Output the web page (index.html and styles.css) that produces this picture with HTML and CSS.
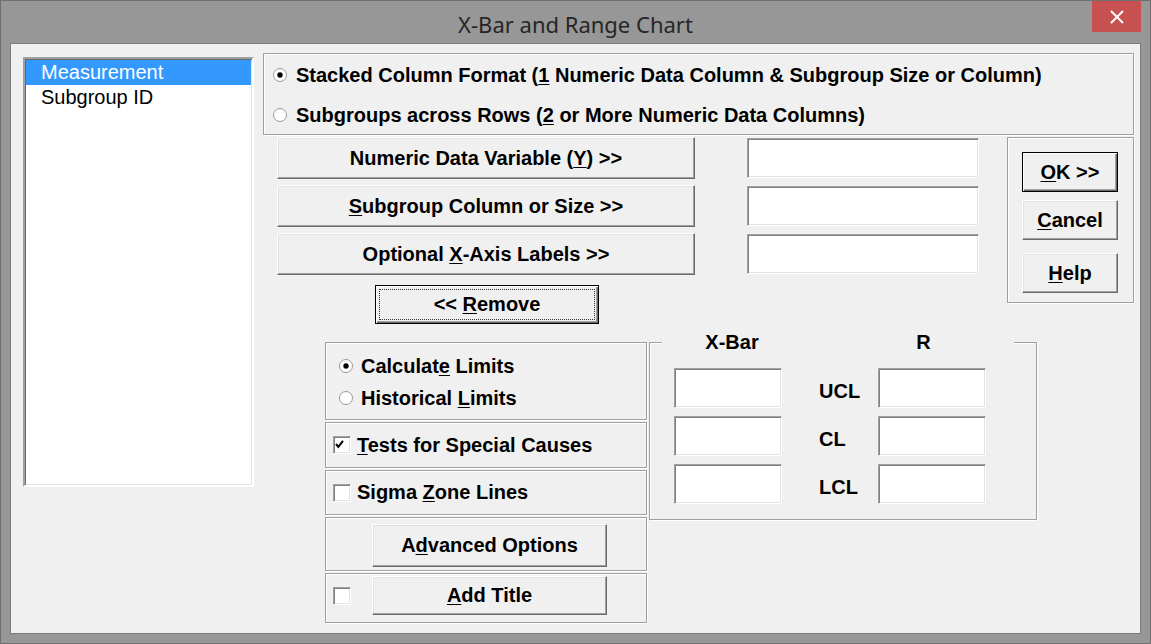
FILE: index.html
```html
<!DOCTYPE html>
<html>
<head>
<meta charset="utf-8">
<title>X-Bar and Range Chart</title>
<link rel="stylesheet" href="styles.css">
</head>
<body>
<div class="window">
  <div class="titlebar">
    <div class="title">X-Bar and Range Chart</div>
    <div class="close">
      <svg width="14" height="14" viewBox="0 0 14 14"><path d="M1 1 L13 13 M13 1 L1 13" stroke="#fff" stroke-width="2" fill="none"/></svg>
    </div>
  </div>
  <div class="client">
    <div class="listbox">
      <div class="item selected">Measurement</div>
      <div class="item">Subgroup ID</div>
    </div>
    <div class="right">
      <div class="etched format">
        <div class="opt">
          <svg class="radio" viewBox="0 0 14 14"><circle cx="7" cy="7" r="6.5" fill="#fff" stroke="#999"/><circle cx="7" cy="7" r="2.7" fill="#000"/></svg>
          <span>Stacked Column Format (<u>1</u> Numeric Data Column &amp; Subgroup Size or Column)</span>
        </div>
        <div class="opt">
          <svg class="radio" viewBox="0 0 14 14"><circle cx="7" cy="7" r="6.5" fill="#fff" stroke="#999"/></svg>
          <span>Subgroups across Rows (<u>2</u> or More Numeric Data Columns)</span>
        </div>
      </div>
      <div class="mid">
        <div class="vars">
          <div class="var-grid">
            <button class="btn var"><span>Numeric Data Variable (<u>Y</u>) &gt;&gt;</span></button>
            <div class="field"></div>
            <button class="btn var"><span><u>S</u>ubgroup Column or Size &gt;&gt;</span></button>
            <div class="field"></div>
            <button class="btn var"><span>Optional <u>X</u>-Axis Labels &gt;&gt;</span></button>
            <div class="field"></div>
          </div>
          <button class="btn default remove"><span>&lt;&lt; <u>R</u>emove</span></button>
        </div>
        <div class="etched actions">
          <button class="btn default ok"><span><u>O</u>K &gt;&gt;</span></button>
          <button class="btn cancel"><span><u>C</u>ancel</span></button>
          <button class="btn help"><span><u>H</u>elp</span></button>
        </div>
      </div>
      <div class="lower">
        <div class="stack">
          <div class="etched box box-limits">
            <div class="row">
              <svg class="radio" viewBox="0 0 14 14"><circle cx="7" cy="7" r="6.5" fill="#fff" stroke="#999"/><circle cx="7" cy="7" r="2.7" fill="#000"/></svg>
              <span>Calculat<u>e</u> Limits</span>
            </div>
            <div class="row">
              <svg class="radio" viewBox="0 0 14 14"><circle cx="7" cy="7" r="6.5" fill="#fff" stroke="#999"/></svg>
              <span>Historical <u>L</u>imits</span>
            </div>
          </div>
          <div class="etched box box-tests">
            <span class="check"><svg width="16" height="16" viewBox="0 0 16 16"><path d="M2 7 L4.3 9.8 L9 3.8" stroke="#000" stroke-width="2" fill="none"/></svg></span>
            <span class="lbl"><u>T</u>ests for Special Causes</span>
          </div>
          <div class="etched box box-sigma">
            <span class="check"></span>
            <span class="lbl">Sigma <u>Z</u>one Lines</span>
          </div>
          <div class="etched box box-adv">
            <button class="btn wide"><span>A<u>d</u>vanced Options</span></button>
          </div>
          <div class="etched box box-title">
            <span class="check"></span>
            <button class="btn wide short"><span><u>A</u>dd Title</span></button>
          </div>
        </div>
        <div class="etched limits">
          <div class="limits-head">
            <span class="hx">X-Bar</span>
            <span class="hr">R</span>
          </div>
          <div class="limits-grid">
            <div class="field small"></div>
            <div class="lim-lbl">UCL</div>
            <div class="field small"></div>
            <div class="field small"></div>
            <div class="lim-lbl">CL</div>
            <div class="field small"></div>
            <div class="field small"></div>
            <div class="lim-lbl">LCL</div>
            <div class="field small"></div>
          </div>
        </div>
      </div>
    </div>
  </div>
</div>
</body>
</html>
```
FILE: styles.css
```css
* { box-sizing: border-box; }
html, body { margin: 0; padding: 0; }
body {
  width: 1151px;
  height: 644px;
  overflow: hidden;
  background: #979797;
  font-family: "Liberation Sans", Arial, sans-serif;
  color: #000;
}
u { text-decoration-thickness: 1px; text-underline-offset: 2px; }

.window {
  width: 1151px;
  height: 644px;
  border: 1px solid #6f6f6f;
  background: #979797;
  padding: 0 9px 9px 9px;
  display: flex;
  flex-direction: column;
}

.titlebar {
  height: 42px;
  flex: none;
  display: grid;
  grid-template-columns: 49px 1fr 49px;
  align-items: start;
}
.title {
  grid-column: 2;
  text-align: center;
  font-family: "Noto Sans", "Open Sans", sans-serif;
  font-size: 22px;
  line-height: 40px;
  padding-top: 3px;
  color: #262626;
}
.close {
  grid-column: 3;
  width: 49px;
  height: 31px;
  background: #c75050;
  display: flex;
  align-items: center;
  justify-content: center;
}

.client {
  flex: 1;
  background: #f0f0f0;
  border: 1px solid #7b7b7b;
  display: flex;
  align-items: flex-start;
  padding: 9px 0 0 12px;
}

.listbox {
  width: 231px;
  height: 430px;
  margin-top: 4px;
  flex: none;
  background: #fff;
  border: 2px solid;
  border-color: #a0a0a0 #fff #fff #a0a0a0;
  box-shadow: inset 1px 1px #696969, inset -1px -1px #e3e3e3;
  padding: 1px;
}
.item {
  height: 25px;
  line-height: 25px;
  padding-left: 15px;
  font-size: 20px;
  white-space: nowrap;
}
.item.selected { background: #3399ff; color: #fff; }

.right {
  width: 871px;
  margin-left: 9px;
  flex: none;
  display: flex;
  flex-direction: column;
}

.etched {
  border: 1px solid #a0a0a0;
  box-shadow: inset 1px 1px #fff, 1px 1px 0 #fff;
}

.format {
  height: 82px;
  padding: 6px 0 0 9px;
  display: flex;
  flex-direction: column;
  gap: 10px;
}
.opt, .row {
  display: flex;
  align-items: center;
  height: 30px;
  font-weight: bold;
  font-size: 20px;
  white-space: nowrap;
}
.radio {
  width: 14px;
  height: 14px;
  flex: none;
  margin-right: 9px;
}

.mid {
  display: flex;
  margin-top: 2px;
}
.vars {
  width: 716px;
  flex: none;
  padding-left: 14px;
}
.var-grid {
  display: grid;
  grid-template-columns: 418px 232px;
  column-gap: 52px;
  row-gap: 6px;
  grid-auto-rows: 42px;
  align-items: center;
}

.btn {
  display: flex;
  align-items: center;
  justify-content: center;
  font-family: "Liberation Sans", Arial, sans-serif;
  font-weight: bold;
  font-size: 20px;
  color: #000;
  background: #f0f0f0;
  border: 1px solid;
  border-color: #fff #696969 #696969 #fff;
  box-shadow: inset -1px -1px #a0a0a0, inset 1px 1px #e3e3e3;
  padding: 0;
  margin: 0;
  white-space: nowrap;
}
.btn.default {
  position: relative;
  border: 1px solid #000;
  box-shadow: inset 1px 1px #fff, inset -1px -1px #696969, inset -2px -2px #a0a0a0;
}
.btn.var { height: 42px; width: 418px; }
.remove {
  width: 224px;
  height: 39px;
  margin: 10px 0 0 98px;
}
.remove::after {
  content: "";
  position: absolute;
  left: 3px;
  top: 3px;
  right: 3px;
  bottom: 3px;
  border: 1px dotted #333;
}

.field {
  height: 40px;
  background: #fff;
  border: 1px solid;
  border-color: #a0a0a0 #fff #fff #a0a0a0;
  box-shadow: inset 1px 1px #808080, inset -1px -1px #e3e3e3;
}

.actions {
  width: 127px;
  height: 166px;
  flex: none;
  margin-left: 28px;
  padding: 14px 0 0 14px;
  display: flex;
  flex-direction: column;
}
.actions .btn { width: 96px; height: 40px; }
.cancel { margin-top: 8px; }
.help { margin-top: 13px; }

.lower {
  display: flex;
  align-items: flex-start;
  margin-top: 18px;
  padding-left: 62px;
}
.stack {
  width: 322px;
  flex: none;
  display: flex;
  flex-direction: column;
  gap: 2px;
}
.box {
  display: flex;
  font-weight: bold;
  font-size: 20px;
  white-space: nowrap;
}
.box-limits {
  height: 78px;
  flex-direction: column;
  gap: 2px;
  padding: 8px 0 0 13px;
}
.box-limits .radio { margin-right: 8px; }
.box-tests, .box-sigma {
  align-items: center;
  padding-left: 7px;
}
.box-tests { height: 46px; }
.box-sigma { height: 45px; }
.check {
  width: 18px;
  height: 18px;
  flex: none;
  background: #fff;
  border: 1px solid;
  border-color: #a0a0a0 #fff #fff #a0a0a0;
  box-shadow: inset 1px 1px #808080, inset -1px -1px #e3e3e3;
  display: block;
  margin-right: 6px;
}
.check svg { display: block; }
.box-adv {
  height: 54px;
  padding: 6px 0 0 46px;
  align-items: flex-start;
}
.btn.wide { width: 235px; height: 43px; }
.box-title {
  height: 50px;
  align-items: flex-start;
  padding: 2px 0 0 7px;
}
.box-title .check { margin: 11px 21px 0 0; }
.btn.wide.short { height: 39px; }

.limits {
  width: 388px;
  height: 178px;
  flex: none;
  margin-left: 2px;
  padding: 0 0 0 24px;
}
.limits-head {
  display: flex;
  width: 352px;
  height: 22px;
  margin: -12px 0 0 -12px;
  background: #f0f0f0;
  font-weight: bold;
  font-size: 20px;
  line-height: 22px;
}
.hx { width: 140px; text-align: center; }
.hr { width: 123px; margin-left: 60px; text-align: center; }
.limits-grid {
  margin-top: 15px;
  display: grid;
  grid-template-columns: 108px 96px 108px;
  grid-auto-rows: 40px;
  row-gap: 8px;
}
.lim-lbl {
  font-weight: bold;
  font-size: 20px;
  padding: 3px 0 0 37px;
  line-height: 40px;
}
```
